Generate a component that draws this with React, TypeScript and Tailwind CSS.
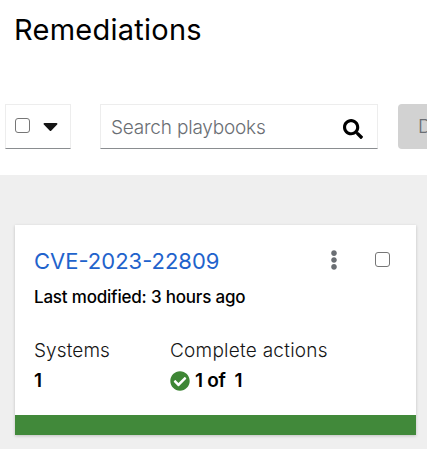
import React from 'react'
import { FaCaretDown, FaCheckCircle, FaEllipsisV, FaSearch } from 'react-icons/fa'

interface Remediation {
  name: string
  modified: string
  systems: number
  done: number
  total: number
}

const remediation: Remediation = {
  name: 'CVE-2023-22809',
  modified: '3 hours ago',
  systems: 1,
  done: 1,
  total: 1
}

const Checkbox: React.FC<{ label: string }> = ({ label }) => (
  <input
    type="checkbox"
    aria-label={label}
    className="block h-[15px] w-[15px] shrink-0 appearance-none rounded-[3px] border border-[#767676] bg-white"
  />
)

const Toolbar: React.FC = () => (
  <div className="mt-[54px] flex h-[45px] pl-[5px]">
    <div className="flex w-[66px] shrink-0 border border-[#ededed] border-b-[#8a8d90] pt-[13px] pl-[9px]">
      <Checkbox label="Select all" />
      <FaCaretDown className="-mt-[4px] ml-[13px] h-[24px] w-[15px] text-[#151515]" preserveAspectRatio="none" />
    </div>
    <div className="ml-[29px] flex w-[278px] shrink-0 border border-[#ededed] border-b-[#8a8d90] pl-[10px]">
      <span className="w-[232px] whitespace-nowrap text-[19px] font-[350] leading-[46px] tracking-[-0.2px] text-[#6a6e73]">
        Search playbooks
      </span>
      <FaSearch className="mt-[14px] h-[20px] w-[20px] shrink-0 text-black" />
    </div>
    <button className="ml-[20px] w-[120px] shrink-0 rounded-[4px] bg-[#d2d2d2] pl-[20px] text-left text-[19px] font-[350] leading-[46px] text-[#6a6e73]">
      Download
    </button>
  </div>
)

const RemediationCard: React.FC<{ item: Remediation }> = ({ item }) => (
  <div className="flex h-[210px] w-[401px] flex-col bg-white shadow-[0_1px_3px_rgba(3,3,3,0.2)]">
    <div className="flex h-[58px] pl-[19px]">
      <a className="mt-[22px] w-[290px] whitespace-nowrap text-[22px] leading-[28px] text-[#1f63cc]">
        {item.name}
      </a>
      <FaEllipsisV className="mt-[25px] h-[20px] w-[20px] shrink-0 text-[#6a6e73]" />
      <div className="ml-[31px] pt-[27px]">
        <Checkbox label={item.name} />
      </div>
    </div>
    <p className="whitespace-nowrap pl-[19px] text-[17px] font-medium leading-[28px] tracking-[-0.2px] text-black">
      Last modified: {item.modified}
    </p>
    <div className="mt-[25px] flex grow pl-[19px] text-[19px] leading-[30px] text-[#151515]">
      <div className="w-[136px]">
        <p className="font-light tracking-[0.1px]">Systems</p>
        <p className="font-semibold text-black">{item.systems}</p>
      </div>
      <div>
        <p className="whitespace-nowrap font-light tracking-[0.25px]">Complete actions</p>
        <p className="flex items-center font-semibold text-black">
          <FaCheckCircle className="mr-[5px] h-[20px] w-[20px] text-[#3e8635]" />
          <span className="whitespace-pre tracking-[-0.3px]">{`${item.done} of  ${item.total}`}</span>
        </p>
      </div>
    </div>
    <div className="h-[20px] bg-[#41893a]" />
  </div>
)

const App: React.FC = () => {
  return (
    <div
      className="flex h-[449px] w-[427px] flex-col overflow-hidden bg-white"
      style={{ fontFamily: 'Inter, sans-serif' }}
    >
      <div className="h-[175px]">
        <h1 className="h-[50px] pt-[10px] pl-[14px] text-[29px] leading-[40px] tracking-[0.25px] text-black">
          Remediations
        </h1>
        <Toolbar />
      </div>
      <main className="grow bg-[#efefef] pt-[50px] pl-[15px]">
        <RemediationCard item={remediation} />
      </main>
    </div>
  )
}

export default App
